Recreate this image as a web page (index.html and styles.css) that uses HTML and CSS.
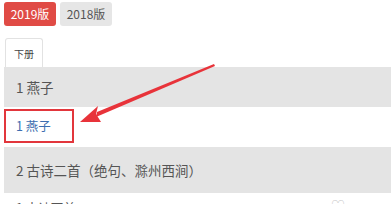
FILE: index.html
```html
<!DOCTYPE html>
<html lang="zh">
<head>
<meta charset="utf-8">
<link rel="stylesheet" href="styles.css">
</head>
<body>
<div class="page">
  <div class="versions">
    <span class="ver ver-active">2019版</span>
    <span class="ver">2018版</span>
  </div>
  <div class="tabs">
    <span class="tab">下册</span>
  </div>
  <div class="list">
    <div class="unit">1 燕子</div>
    <div class="item"><a class="lesson boxed">1 燕子</a></div>
    <div class="unit unit-tall">2 古诗二首（绝句、滁州西涧）</div>
    <div class="item item-last"><a class="lesson">1 古诗两首</a><span class="fav">♡</span></div>
  </div>
  <svg class="arrow" width="391" height="204" viewBox="0 0 391 204">
    <polygon points="214,64 215,66 96,117 97,112" fill="#e8333a"/>
    <polygon points="80,122 98,106 96,114 101,122" fill="#e8333a"/>
  </svg>
</div>
</body>
</html>
```
FILE: styles.css
```css
html, body {
  margin: 0;
  padding: 0;
  background: #fff;
  overflow: hidden;
}
.page {
  position: relative;
  width: 391px;
  height: 204px;
  padding-left: 4px;
  box-sizing: border-box;
  font-family: "Noto Sans CJK SC", "Liberation Sans", sans-serif;
}
.versions {
  display: flex;
  gap: 4px;
  padding-top: 2px;
}
.ver {
  width: 52px;
  height: 24px;
  line-height: 24px;
  text-align: center;
  font-size: 12px;
  border-radius: 3px;
  background: #e6e6e6;
  color: #555;
}
.ver-active {
  background: #e04b45;
  color: #fff;
}
.tabs {
  margin-top: 12px;
  display: flex;
  padding-left: 1px;
}
.tab {
  width: 38px;
  height: 29px;
  line-height: 29px;
  text-align: center;
  font-size: 10px;
  color: #444;
  border: 1px solid #e2e2e2;
  border-bottom: none;
  border-radius: 3px 3px 0 0;
  box-sizing: border-box;
  background: #fff;
}
.unit {
  height: 40px;
  line-height: 40px;
  background: #e4e4e4;
  padding-left: 12px;
  font-size: 13.5px;
  color: #555;
}
.unit-tall {
  height: 46px;
  line-height: 46px;
}
.item {
  height: 40px;
  display: flex;
  align-items: center;
}
.lesson {
  font-size: 12.5px;
  color: #3d6eb0;
  padding-left: 12px;
}
.boxed {
  width: 70px;
  height: 34px;
  line-height: 30px;
  box-sizing: border-box;
  border: 2px solid #e2363c;
  padding-left: 10px;
  margin-top: 2px;
  align-self: flex-start;
}
.item-last {
  justify-content: space-between;
  padding-right: 46px;
  align-items: flex-start;
  padding-top: 5px;
}
.item-last .lesson {
  color: #555;
}
.fav {
  color: #ccc;
  font-size: 14px;
  line-height: 14px;
}
.arrow {
  position: absolute;
  left: 0;
  top: 0;
  pointer-events: none;
}
```
